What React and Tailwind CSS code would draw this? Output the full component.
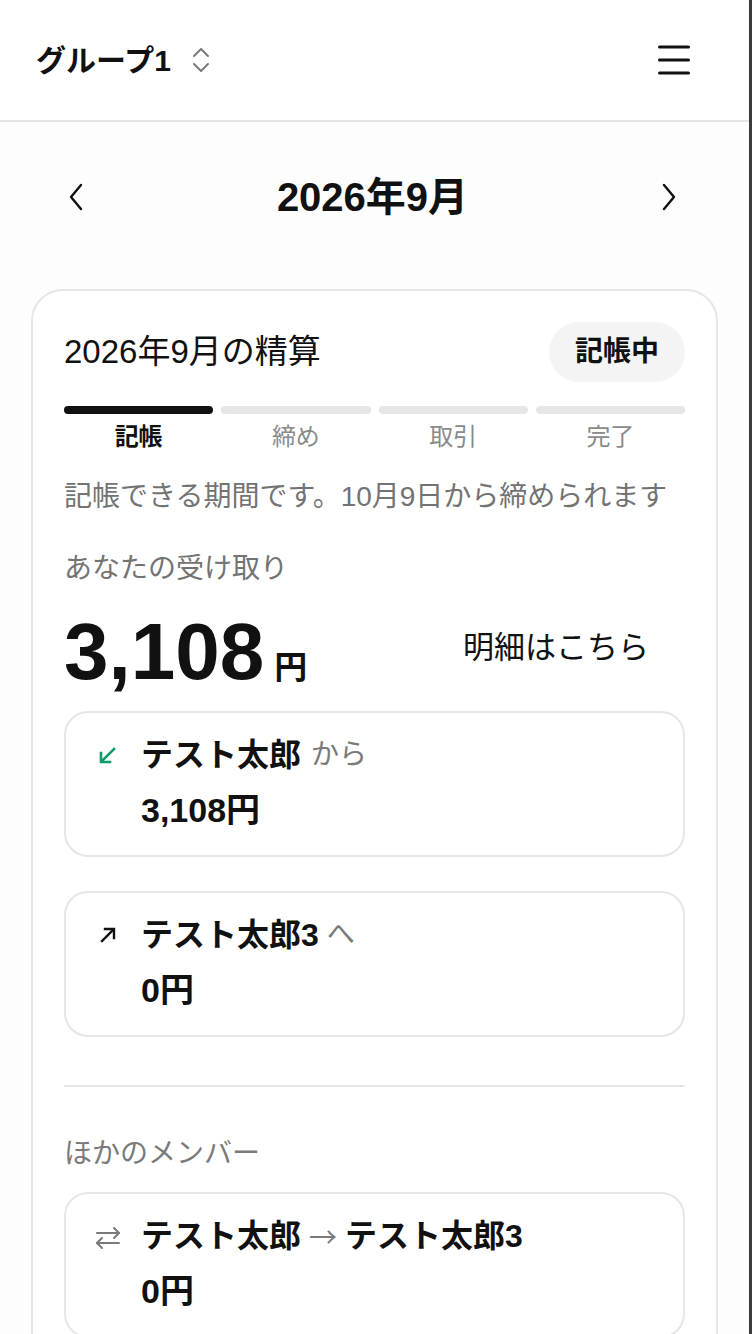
import React from "react";

const FONT = { fontFamily: '"Liberation Sans", "Noto Sans CJK JP", sans-serif' };

function ArrowDownLeftIcon() {
  return (
    <svg width="20" height="20" viewBox="0 0 20 20" fill="none" stroke="#119a6b" strokeWidth="2.6" strokeLinecap="square" strokeLinejoin="miter">
      <path d="M16 4 L4 16" />
      <path d="M3 8 V17 H12" />
    </svg>
  );
}

function ArrowUpRightIcon() {
  return (
    <svg width="20" height="20" viewBox="0 0 20 20" fill="none" stroke="#111" strokeWidth="2.4" strokeLinecap="square" strokeLinejoin="miter">
      <path d="M4 16 L15 5" />
      <path d="M7 4 H16 V13" />
    </svg>
  );
}

function SwapIcon() {
  return (
    <svg width="28" height="24" viewBox="0 0 28 24" fill="none" stroke="#7a7a7a" strokeWidth="2" strokeLinecap="round" strokeLinejoin="round">
      <path d="M3 7 H25" />
      <path d="M20 2 L25 7 L20 12" />
      <path d="M25 17 H3" />
      <path d="M8 12 L3 17 L8 22" />
    </svg>
  );
}

function SubCard({ icon, name, suffix, amount, className = "" }) {
  return (
    <div className={`border-2 border-[#e6e6e6] rounded-[24px] bg-white pl-[28px] pr-[30px] pt-[20px] pb-[23px] flex ${className}`}>
      <div className="w-[28px] shrink-0 pt-[12px] flex justify-center">{icon}</div>
      <div className="ml-[19px] flex flex-col gap-[11px]">
        <div className="leading-[44px] flex items-center whitespace-nowrap">{name}{suffix}</div>
        <div className="leading-[44px] text-[34px] font-bold text-[#111]">{amount}</div>
      </div>
    </div>
  );
}

export default function App() {
  const steps = ["記帳", "締め", "取引", "完了"];
  return (
    <div style={FONT} className="w-[752px] min-h-[1334px] flex bg-white text-[#111]">
      <div className="flex-1 flex flex-col bg-[#fdfdfd] overflow-hidden h-[1334px]">
        {/* Header */}
        <header className="h-[122px] shrink-0 bg-white border-b-2 border-[#e5e5e5] flex items-center justify-between pl-[36px] pr-[59px]">
          <div className="flex items-center">
            <span className="text-[30px] font-bold">グループ1</span>
            <svg className="ml-[20px]" width="20" height="26" viewBox="0 0 20 26" fill="none" stroke="#7a7a7a" strokeWidth="2" strokeLinecap="round" strokeLinejoin="round">
              <path d="M3 9 L10 2 L17 9" />
              <path d="M3 17 L10 24 L17 17" />
            </svg>
          </div>
          <svg width="32" height="30" viewBox="0 0 32 30" fill="none" stroke="#111" strokeWidth="3" strokeLinecap="round">
            <path d="M1.5 2 H30.5" />
            <path d="M1.5 15 H30.5" />
            <path d="M1.5 28 H30.5" />
          </svg>
        </header>

        {/* Month nav */}
        <div className="mt-[47px] h-[56px] flex items-center justify-between pl-[64px] pr-[68px]">
          <svg width="24" height="30" viewBox="0 0 24 30" fill="none" stroke="#111" strokeWidth="2.4" strokeLinecap="round" strokeLinejoin="round">
            <path d="M17 3 L7 15 L17 27" />
          </svg>
          <div className="text-[40px] font-bold">2026年9月</div>
          <svg width="24" height="30" viewBox="0 0 24 30" fill="none" stroke="#111" strokeWidth="2.4" strokeLinecap="round" strokeLinejoin="round">
            <path d="M7 3 L17 15 L7 27" />
          </svg>
        </div>

        {/* Main card */}
        <div className="mt-[64px] mx-[31px] border-2 border-[#e6e6e6] rounded-[32px] bg-white px-[31px] pt-[31px] pb-[60px]">
          <div className="flex items-center justify-between h-[60px]">
            <div className="text-[33px]">2026年9月の精算</div>
            <div className="h-[60px] px-[26px] rounded-full bg-[#f4f4f4] flex items-center text-[28px] font-bold">記帳中</div>
          </div>

          <div className="mt-[24px] grid grid-cols-4 gap-[8px]">
            <div className="h-[8px] rounded-full bg-[#111]" />
            <div className="h-[8px] rounded-full bg-[#e6e6e6]" />
            <div className="h-[8px] rounded-full bg-[#e6e6e6]" />
            <div className="h-[8px] rounded-full bg-[#e6e6e6]" />
          </div>
          <div className="mt-[7px] grid grid-cols-4 gap-[8px] text-center text-[24px] leading-[32px]">
            {steps.map((s, i) => (
              <div key={s} className={i === 0 ? "font-bold text-[#111]" : "text-[#8a8a8a]"}>{s}</div>
            ))}
          </div>

          <div className="mt-[24px] text-[28px] leading-[40px] text-[#737373] whitespace-nowrap">記帳できる期間です。10月9日から締められます</div>
          <div className="mt-[32px] text-[28px] leading-[40px] text-[#737373]">あなたの受け取り</div>

          <div className="mt-[23px] h-[80px] flex items-center justify-between">
            <div className="flex items-baseline">
              <span className="text-[80px] leading-[80px] font-bold">3,108</span>
              <span className="ml-[10px] text-[33px] font-bold">円</span>
            </div>
            <div className="mr-[36px] mb-[8px] text-[31px]">明細はこちら</div>
          </div>

          <SubCard
            className="mt-[19px]"
            icon={<ArrowDownLeftIcon />}
            name={<span className="text-[32px] font-bold">テスト太郎</span>}
            suffix={<span className="ml-[10px] text-[28px] text-[#7a7a7a]">から</span>}
            amount="3,108円"
          />
          <SubCard
            className="mt-[34px]"
            icon={<ArrowUpRightIcon />}
            name={<span className="text-[32px] font-bold">テスト太郎3</span>}
            suffix={<span className="ml-[8px] text-[28px] text-[#7a7a7a]">へ</span>}
            amount="0円"
          />

          <div className="mt-[48px] h-[2px] bg-[#e6e6e6]" />

          <div className="mt-[47px] text-[28px] leading-[40px] text-[#7a7a7a]">ほかのメンバー</div>

          <SubCard
            className="mt-[18px]"
            icon={<SwapIcon />}
            name={
              <span className="flex items-center">
                <span className="text-[32px] font-bold">テスト太郎</span>
                <span className="mx-[8px] text-[28px] text-[#7a7a7a]" style={{ fontFamily: '"Noto Sans CJK JP", sans-serif' }}>→</span>
                <span className="text-[32px] font-bold">テスト太郎3</span>
              </span>
            }
            suffix={null}
            amount="0円"
          />
        </div>
      </div>
      <div className="w-[3px] shrink-0 bg-[#3a3a3a]" />
    </div>
  );
}
